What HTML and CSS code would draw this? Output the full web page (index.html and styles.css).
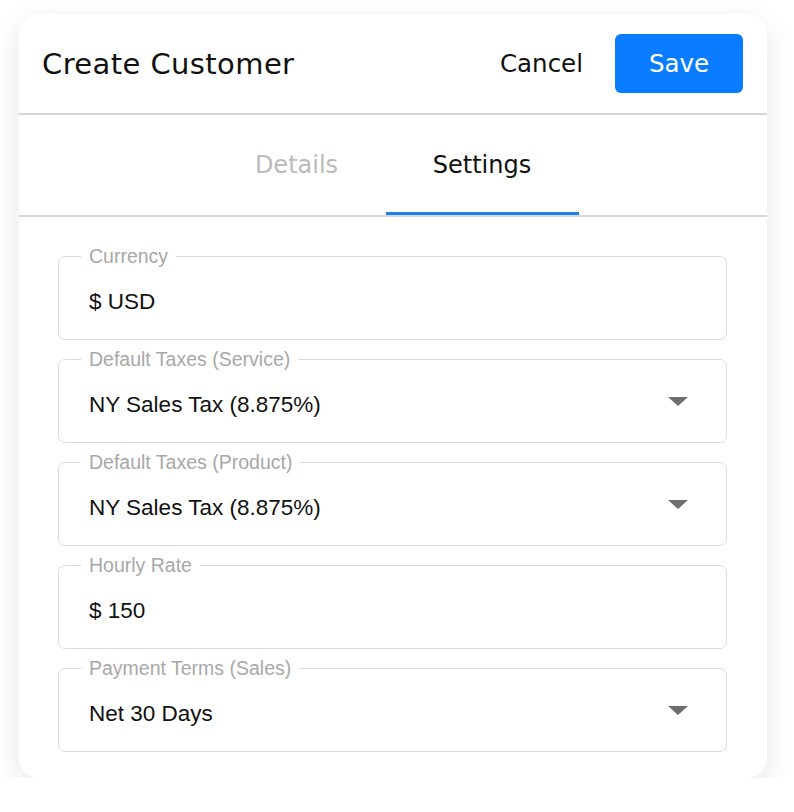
FILE: index.html
```html
<!DOCTYPE html>
<html lang="en">
<head>
  <meta charset="UTF-8" />
  <meta name="viewport" content="width=device-width, initial-scale=1.0" />
  <title>Create Customer</title>
  <link rel="stylesheet" href="styles.css">
</head>
<body>
  <div class="card">
    <div class="header">
      <h1>Create Customer</h1>
      <button class="link-btn">Cancel</button>
      <button class="btn">Save</button>
    </div>

    <div class="tabs">
      <div class="tab tab-details">Details</div>
      <div class="tab tab-settings active">Settings</div>
    </div>

    <div class="form">
      <fieldset class="field">
        <legend>Currency</legend>
        <div class="value">$ USD</div>
      </fieldset>

      <fieldset class="field">
        <legend>Default Taxes (Service)</legend>
        <div class="value">NY Sales Tax (8.875%)</div>
        <span class="caret"></span>
      </fieldset>

      <fieldset class="field">
        <legend>Default Taxes (Product)</legend>
        <div class="value">NY Sales Tax (8.875%)</div>
        <span class="caret"></span>
      </fieldset>

      <fieldset class="field">
        <legend>Hourly Rate</legend>
        <div class="value">$ 150</div>
      </fieldset>

      <fieldset class="field">
        <legend>Payment Terms (Sales)</legend>
        <div class="value">Net 30 Days</div>
        <span class="caret"></span>
      </fieldset>
    </div>
  </div>
</body>
</html>
```

FILE: styles.css
```css
body {
  font-family: "Liberation Sans", Arial, sans-serif;
  background-color: #fff;
  margin: 0;
  padding: 14px 0 0 19px;
}
.card {
  width: 748px;
  height: 764px;
  box-sizing: border-box;
  background: #fff;
  border-radius: 20px;
  box-shadow: 0 8px 28px rgba(0,0,0,0.1);
}
.header {
  display: flex;
  align-items: center;
  height: 99px;
  padding: 0 24px 0 23px;
  border-bottom: 2px solid #d6d6d6;
  font-family: "DejaVu Sans", sans-serif;
}
.header h1 {
  flex: 1;
  margin: 0;
  font-size: 29px;
  font-weight: 400;
  color: #111;
  letter-spacing: 0.4px;
}
.link-btn {
  background: none;
  border: none;
  font-family: inherit;
  font-size: 24.5px;
  color: #111;
  padding: 0;
  margin-right: 32px;
}
.btn {
  width: 128px;
  height: 59px;
  background-color: #0a7cff;
  color: white;
  border: none;
  border-radius: 6px;
  font-family: inherit;
  font-size: 24.5px;
}
.tabs {
  display: flex;
  justify-content: center;
  border-bottom: 2px solid #d6d6d6;
  font-family: "DejaVu Sans", sans-serif;
}
.tab {
  height: 100px;
  box-sizing: border-box;
  display: flex;
  align-items: center;
  justify-content: center;
  padding-top: 3px;
  font-size: 24px;
  color: #bbb;
  border-bottom: 3px solid transparent;
}
.tab-details {
  width: 178px;
}
.tab-settings {
  width: 193px;
}
.tab.active {
  color: #111;
  border-bottom-color: #1a7fe6;
}
.form {
  display: flex;
  flex-direction: column;
  gap: 8px;
  padding: 28px 40px 0 39px;
}
.field {
  position: relative;
  margin: 0;
  height: 95px;
  box-sizing: border-box;
  padding: 0 0 0 30px;
  border: 1.5px solid #dcdcdc;
  border-radius: 7px;
}
.field legend {
  margin-left: -8px;
  padding: 0 8px;
  font-size: 19.5px;
  line-height: 22px;
  color: #a8a8a8;
}
.value {
  margin-top: 22px;
  font-size: 22.5px;
  line-height: 26px;
  color: #111;
}
.caret {
  position: absolute;
  right: 38px;
  top: 27px;
  width: 0;
  height: 0;
  border-left: 10px solid transparent;
  border-right: 10px solid transparent;
  border-top: 9px solid #6e6e6e;
}
```
